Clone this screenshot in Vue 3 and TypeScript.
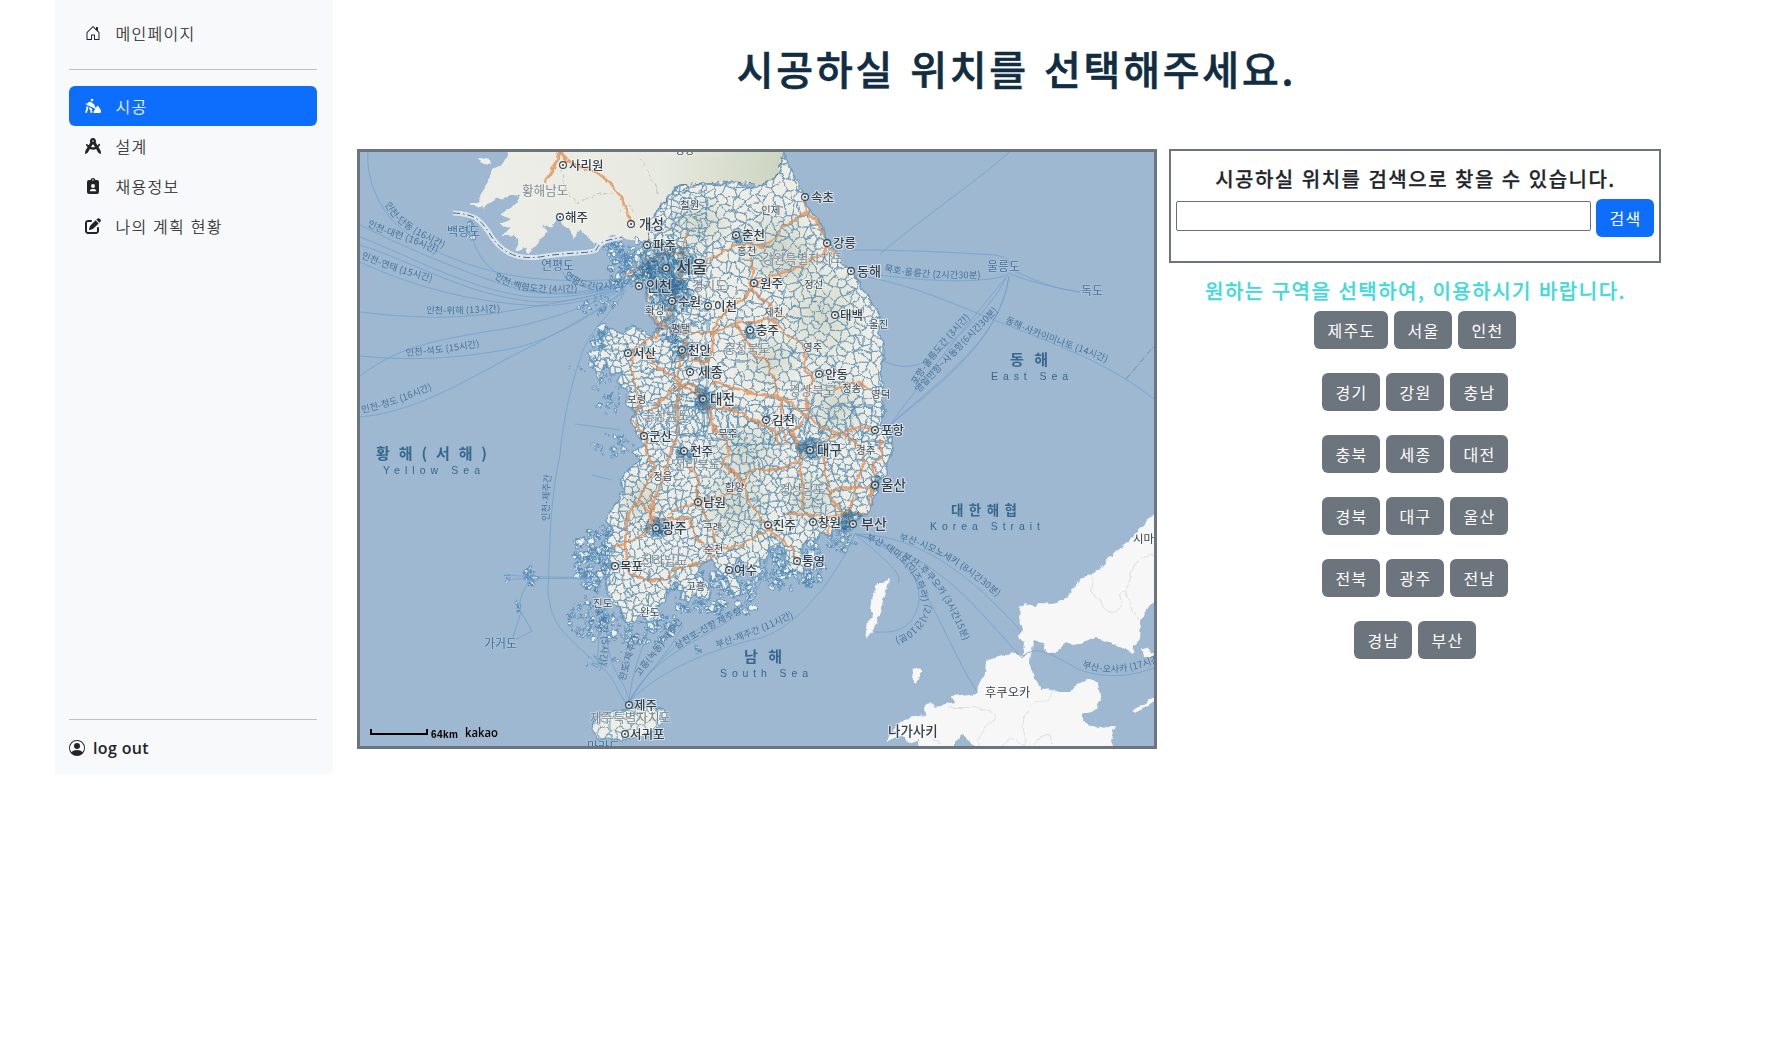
<script setup lang="ts">
type Pt = [number, number]

const menu = [
  { icon: 'dig', label: '시공', active: true },
  { icon: 'compass', label: '설계', active: false },
  { icon: 'badge', label: '채용정보', active: false },
  { icon: 'pen', label: '나의 계획 현황', active: false },
]

const regionRows = [
  ['제주도', '서울', '인천'],
  ['경기', '강원', '충남'],
  ['충북', '세종', '대전'],
  ['경북', '대구', '울산'],
  ['전북', '광주', '전남'],
  ['경남', '부산'],
]

// Seeded generator keeps the district mesh stable between renders
let seed = 20231
function rnd(): number {
  seed = (seed * 1664525 + 1013904223) % 4294967296
  return seed / 4294967296
}

function clipHalf(poly: Pt[], a: Pt, b: Pt): Pt[] {
  const mx = (a[0] + b[0]) / 2, my = (a[1] + b[1]) / 2
  const nx = b[0] - a[0], ny = b[1] - a[1]
  const side = (p: Pt) => (p[0] - mx) * nx + (p[1] - my) * ny
  const out: Pt[] = []
  for (let i = 0; i < poly.length; i++) {
    const p = poly[i], q = poly[(i + 1) % poly.length]
    const sp = side(p), sq = side(q)
    if (sp <= 0) out.push(p)
    if ((sp < 0 && sq > 0) || (sp > 0 && sq < 0)) {
      const t = sp / (sp - sq)
      out.push([p[0] + (q[0] - p[0]) * t, p[1] + (q[1] - p[1]) * t])
    }
  }
  return out
}

function mesh(x0: number, y0: number, x1: number, y1: number, s: number): string {
  const cols = Math.ceil((x1 - x0) / s), rows = Math.ceil((y1 - y0) / s)
  const pts: Pt[][] = []
  for (let r = 0; r < rows; r++) {
    pts.push([])
    for (let c = 0; c < cols; c++)
      pts[r].push([x0 + (c + 0.5 + (rnd() - 0.5) * 1.1) * s, y0 + (r + 0.5 + (rnd() - 0.5) * 1.1) * s])
  }
  let d = ''
  for (let r = 0; r < rows; r++)
    for (let c = 0; c < cols; c++) {
      const p = pts[r][c]
      let poly: Pt[] = [[p[0] - 2 * s, p[1] - 2 * s], [p[0] + 2 * s, p[1] - 2 * s], [p[0] + 2 * s, p[1] + 2 * s], [p[0] - 2 * s, p[1] + 2 * s]]
      for (let i = -2; i <= 2; i++)
        for (let j = -2; j <= 2; j++) {
          const q = pts[r + i]?.[c + j]
          if (q && (i || j)) poly = clipHalf(poly, p, q)
        }
      d += 'M' + poly.map((v) => v[0].toFixed(1) + ' ' + v[1].toFixed(1)).join('L') + 'Z'
    }
  return d
}

function blobs(cx: number, cy: number, rx: number, ry: number, n: number, size: number): string {
  let d = ''
  for (let i = 0; i < n; i++) {
    const a = rnd() * 6.283, k = Math.sqrt(rnd())
    const x = cx + Math.cos(a) * rx * k, y = cy + Math.sin(a) * ry * k
    const r = size * (0.15 + rnd() * rnd() * 1.25)
    const v: string[] = []
    for (let j = 0; j < 7; j++) {
      const t = (j / 7) * 6.283, q = r * (0.5 + rnd() * 0.85)
      v.push((x + Math.cos(t) * q).toFixed(1) + ' ' + (y + Math.sin(t) * q).toFixed(1))
    }
    d += 'M' + v.join('L') + 'Z'
  }
  return d
}

const south =
  'M784 152L786 160L793 172L798 184L804 194L806 205L815 216L822 227L828 242L836 252L843 263L853 272L860 284L867 296L875 307L880 320L879 332L884 345L884 358L880 372L883 384L882 398L885 412L880 425L886 431L893 427L892 440L892 455L888 463L887 474L881 481L879 492L872 499L871 508L864 517L857 519L852 529L842 534L836 529L829 536L822 533L815 542L806 541L800 549L808 560L803 573L793 568L784 559L786 549L777 546L769 549L766 560L758 557L762 573L754 579L747 570L738 558L732 564L737 577L742 593L734 598L728 583L720 571L711 560L702 564L694 575L702 585L712 592L706 601L695 594L688 601L680 599L684 587L676 581L669 591L666 602L657 606L658 618L650 622L640 616L632 624L624 621L621 607L612 603L606 592L607 577L613 567L607 557L615 549L606 541L613 530L606 521L611 510L618 500L624 489L620 480L628 470L640 461L633 453L645 444L637 435L631 424L634 413L627 405L627 391L617 382L622 371L612 376L606 360L600 384L594 366L599 352L606 345L602 338L610 329L622 333L632 326L642 330L652 337L657 327L650 315L655 306L645 298L647 285L634 281L624 280L628 270L636 263L633 254L643 247L648 240L650 220L656 214L665 200L673 190L681 185L694 186L705 183L722 185L735 182L750 187L764 185L775 177L781 170L782 158Z'
const north =
  'M512 152L506 157L503 164L491 170L488 184L482 193L477 203L469 205L484 207L491 203L495 197L503 199L512 194L522 196L514 207L501 215L511 219L501 225L511 228L503 235L515 233L519 244L516 250L527 247L528 253L537 243L547 231L541 224L552 226L557 218L549 215L559 217L564 227L571 228L573 239L579 229L589 238L598 245L605 242L610 234L622 236L635 242L648 240L650 220L665 200L681 185L705 183L735 182L764 185L778 174L783 152Z'
const jeju = 'M592 729L593 722L601 716L612 712L626 709L640 708L652 707L662 708L666 714L663 722L656 728L648 733L636 737L622 740L608 738L598 740Z'
const islands =
  blobs(620, 268, 12, 20, 60, 4) + blobs(640, 262, 26, 24, 80, 3) + blobs(617, 250, 14, 8, 36, 4) +
  blobs(595, 306, 20, 10, 34, 2.6) + blobs(601, 348, 11, 22, 60, 5.5) + blobs(607, 390, 16, 26, 44, 2.4) +
  blobs(598, 558, 24, 34, 170, 4.4) + blobs(588, 617, 20, 22, 100, 2.7) + blobs(640, 626, 38, 20, 130, 3.6) +
  blobs(702, 592, 34, 22, 130, 3.8) + blobs(742, 590, 14, 28, 56, 3.6) + blobs(790, 564, 38, 26, 190, 3.8) +
  blobs(840, 543, 16, 10, 34, 3) + blobs(612, 445, 22, 12, 34, 2.2) + blobs(530, 576, 5, 9, 26, 2.6) +
  blobs(518, 607, 3, 6, 10, 1.8) + blobs(507, 577, 2, 4, 6, 2) + blobs(610, 660, 24, 12, 30, 1.6) +
  blobs(471, 227, 7, 12, 16, 2.6) + blobs(697, 649, 5, 4, 8, 2) + blobs(583, 368, 30, 4, 12, 1.6)

const coarse = mesh(690, 150, 900, 420, 9.2)
const west = mesh(588, 150, 690, 420, 6.6)
const lower = mesh(588, 420, 900, 650, 7.2)
const jejuMesh = mesh(590, 705, 670, 742, 8)

const dense = [
  [666, 268, 27, 26, 260], [652, 282, 24, 24, 130], [676, 298, 16, 16, 80], [703, 399, 12, 10, 60],
  [811, 450, 12, 10, 60], [852, 524, 13, 13, 80], [657, 527, 11, 10, 55], [877, 484, 8, 8, 30],
  [739, 235, 8, 7, 20], [682, 351, 10, 8, 24], [752, 331, 7, 7, 18], [685, 452, 9, 8, 26], [672, 330, 14, 14, 30],
]
const denseMesh = dense.map(([x, y, rx, ry, n]) => blobs(x, y, rx, ry, n, 4.2)).join('')

const tints = [
  [775, 245, 44, 42], [822, 315, 46, 56], [790, 262, 36, 30], [735, 505, 42, 46], [745, 452, 40, 36],
  [835, 405, 34, 44], [770, 360, 34, 30], [700, 222, 38, 30], [640, 500, 26, 28], [812, 500, 34, 28],
]

const roads = [
  'M561 152L555 165L545 182', 'M561 152L566 160L580 167L598 173L611 184L622 198L628 215L633 224',
  'M784 152L785 155', 'M688 231L684 244L681 262L681 277L676 290L672 302L668 318L659 326',
  'M804 193L806 212L817 222L826 239L824 253L808 262L793 270L775 275L768 278L750 288L743 300L731 306L722 316L713 330',
  'M806 212L793 221L782 228L775 239L762 247L747 244L736 245L722 253L705 261',
  'M826 247L843 257L851 270L862 285', 'M750 254L753 270L750 286L760 298L772 308L784 318',
  'M626 276L640 267L652 258L668 254L682 252', 'M646 288L649 310L659 326L657 335L640 346L634 352L631 366L635 385L640 405L632 417L639 430L647 436L646 451L655 470',
  'M659 326L672 329L691 333L713 334L735 323L755 322L772 318L787 335L803 344L806 358L804 370L813 377L806 394L808 412L801 425L791 431L798 443',
  'M686 338L682 355L678 372L679 390L676 408L679 420L676 440L670 455L662 480L655 500L651 516L661 520L688 518L693 526L697 540L705 545',
  'M713 330L713 345L707 362L692 360L685 352', 'M735 323L745 338L755 355L767 360L773 377L779 397L781 410L782 430L788 445',
  'M645 352L658 367L672 375L681 387L695 392L703 403L711 415L714 430L727 440L729 455L722 463L737 477L745 485L748 500L760 518L770 530L782 540L793 550L796 560',
  'M711 382L728 386L745 391L762 395L779 397L790 402L805 415L823 428L840 434L858 427L875 430',
  'M705 395L690 383L678 386L664 398L651 411', 'M704 408L722 408L736 410L745 416L762 424L775 430L778 445',
  'M834 389L847 385L858 382L870 390', 'M798 443L811 449L824 442L840 433L852 440L862 447',
  'M822 450L826 470L828 490L835 505L846 515L851 524', 'M828 491L840 489L853 487L871 488L871 512L858 514L844 514L826 518L805 514L786 514',
  'M862 452L864 465L857 480L854 495L849 512L845 518', 'M880 440L882 457L873 462L875 480L870 496',
  'M690 468L697 475L698 485L698 502L705 516L712 530L716 543', 'M722 463L739 475L742 485L730 493L715 497L698 503L683 506L668 514',
  'M655 470L650 477L643 492L638 502L629 514L626 527L625 545L626 560L630 573L640 578L655 581L668 578L676 568L690 566L704 563L716 555',
  'M638 502L650 512L653 520L644 533L625 544L613 547', 'M703 551L730 548L744 544L757 537L768 530L774 525',
  'M651 492L652 515', 'M793 434L800 452L800 470L803 485L803 510', 'M742 483L750 472L756 469L775 470L789 466L798 460L804 458',
  'M826 517L828 535',
]

const ferries = [
  'M368 152C366 178 378 207 397 225C430 254 480 272 530 278C570 282 600 281 626 278',
  'M360 225C410 250 470 275 520 290C560 298 600 292 622 285', 'M360 237C410 256 470 290 530 297C570 299 600 292 622 286',
  'M360 245C410 260 470 298 540 302C575 303 600 293 625 286', 'M360 262C420 290 480 303 540 306C575 305 605 296 625 287',
  'M360 312C410 318 450 319 490 314C540 306 590 297 622 289', 'M360 376C400 345 440 340 490 331C540 325 590 305 624 289',
  'M360 356C420 362 470 357 520 347C560 335 595 315 624 290', 'M360 417C410 412 450 390 510 357C555 335 595 312 624 292',
  'M473 240C478 255 485 265 500 275C540 305 590 290 622 284', 'M563 272C566 285 590 290 620 285',
  'M626 290C610 315 588 330 579 362C568 395 562 430 560 455C550 500 550 540 548 592C552 625 560 630 598 665C615 675 615 690 628 706',
  'M880 254C930 212 985 175 1009 152', 'M852 250C900 250 950 252 995 255C1006 257 1010 260 1010 266',
  'M855 272C900 278 950 284 990 279C1005 277 1008 274 1010 272', 'M1015 271C1030 278 1050 288 1080 292M1010 274C1035 283 1055 288 1080 292',
  'M855 275C920 285 965 310 1010 326C1070 350 1110 365 1154 399', 'M890 425C930 370 975 315 1008 275',
  'M890 425C945 375 1000 340 1009 276', 'M890 425C925 395 1000 345 1009 276', 'M882 360C900 370 920 368 935 355C960 335 990 310 1006 278',
  'M855 534C920 535 970 575 1021 631', 'M855 534C940 560 960 590 1022 658C1035 640 1060 660 1080 670C1110 680 1135 675 1154 668',
  'M855 534C925 555 932 620 977 692', 'M855 534C910 545 925 590 917 609C910 630 895 633 875 632', 'M855 534C880 555 905 575 898 583',
  'M855 534C830 590 790 630 760 638C710 650 660 670 629 702', 'M770 545C765 590 745 610 725 623C690 645 650 660 629 702',
  'M755 570C760 600 740 610 710 622C670 645 645 675 629 702', 'M683 625C672 650 645 675 629 702', 'M650 625C642 650 632 670 629 702',
  'M610 595C605 620 605 650 615 670C620 680 628 690 629 702', 'M590 610C605 625 596 650 598 665',
  'M507 575C530 577 580 578 607 577M507 580C530 577 550 580 607 577M530 580C520 595 518 605 521 612L513 637M521 612L532 631L515 640',
  'M575 424L620 430', 'M592 475L612 480',
]

const lane = [
  ['인천-단동 (16시간)', 'M385 204C395 227 420 236 446 250'], ['인천-대련 (16시간)', 'M367 226C390 238 415 240 446 260'],
  ['인천-연태 (15시간)', 'M361 258C385 268 405 275 436 283'], ['인천-백령도간 (4시간)', 'M494 278C515 293 545 294 582 291'],
  ['연평도간(2시간)', 'M564 276C580 290 598 294 632 284'], ['인천-위해 (13시간)', 'M426 313C450 315 475 313 508 311'],
  ['인천-석도 (15시간)', 'M406 356C430 354 455 352 486 345'], ['인천-청도 (16시간)', 'M362 413C390 407 410 399 438 387'],
  ['인천-제주간', 'M549 521C549 505 549 490 552 470'], ['묵호-울릉간 (2시간30분)', 'M884 271C910 277 945 279 988 278'],
  ['포항-울릉도간 (3시간)', 'M916 385C930 363 948 340 976 312'], ['영일만항~사동항(6시간30분)', 'M919 393C940 370 965 345 1003 306'],
  ['동해-사카이미나토 (14시간)', 'M1005 322C1040 340 1075 348 1114 366'], ['부산-시모노세키 (8시간30분)', 'M899 540C935 548 970 572 1004 603'],
  ['부산-후쿠오카 (3시간15분)', 'M902 558C930 572 948 600 968 652'], ['부산-대마도(이즈하라)', 'M866 540C895 550 930 580 920 618'],
  ['(2시간10분)', 'M926 604C918 630 900 640 878 642'],
  ['부산-제주간 (11시간)', 'M717 648C745 638 770 630 799 614'], ['부산-오사카 (17시간', 'M1082 667C1110 676 1130 673 1160 661'],
  ['삼천포-신항 제주항', 'M677 649C700 635 725 620 750 610'], ['고흥(녹동)-제주간', 'M640 677C652 658 670 640 684 619'],
  ['완도-제주간', 'M625 681C630 665 632 650 642 631'], ['목포간 (5시간)', 'M593 610C605 625 602 640 599 672'],
]

// x, y, name, size, marker x
const cities: [number, number, string, number, number][] = [
  [569, 170, '사리원', 12.5, 563], [565, 222, '해주', 12.5, 560], [639, 229, '개성', 13.5, 631], [653, 250, '파주', 12.5, 647],
  [811, 202, '속초', 12.5, 805], [742, 240, '춘천', 12.5, 736], [833, 248, '강릉', 12.5, 827], [857, 276, '동해', 13, 851],
  [676, 273, '서울', 17, 666], [646, 291, '인천', 14, 639], [760, 288, '원주', 12.5, 754], [678, 306, '수원', 12.5, 672],
  [714, 311, '이천', 12.5, 708], [840, 320, '태백', 12.5, 835], [756, 335, '충주', 12.5, 750], [633, 358, '서산', 12.5, 628],
  [688, 355, '천안', 12.5, 682], [698, 377, '세종', 13.5, 690], [825, 379, '안동', 12.5, 819], [710, 404, '대전', 13.5, 703],
  [772, 425, '김천', 12.5, 766], [649, 441, '군산', 12.5, 644], [881, 435, '포항', 12.5, 875], [690, 456, '전주', 12.5, 684],
  [817, 455, '대구', 13.5, 810], [881, 490, '울산', 13.5, 875], [703, 507, '남원', 12.5, 698], [662, 533, '광주', 13.5, 656],
  [773, 530, '진주', 12.5, 768], [818, 527, '창원', 12.5, 813], [861, 529, '부산', 14, 853], [620, 571, '목포', 12.5, 615],
  [734, 575, '여수', 12.5, 729], [802, 566, '통영', 12.5, 797], [634, 710, '제주', 12.5, 629], [630, 739, '서귀포', 12.5, 625],
]
const towns: [number, number, string][] = [
  [680, 209, '철원'], [761, 214, '인제'], [737, 255, '홍천'], [804, 288, '정선'], [645, 314, '화성'], [764, 316, '제천'],
  [869, 328, '울진'], [671, 332, '평택'], [803, 351, '영주'], [627, 403, '보령'], [842, 392, '청송'], [871, 398, '영덕'],
  [718, 437, '무주'], [856, 454, '경주'], [653, 480, '정읍'], [725, 491, '함양'], [703, 531, '구례'], [704, 553, '순천'],
  [686, 590, '고흥'], [593, 607, '진도'], [640, 616, '완도'],
]
const provinces: [number, number, string][] = [
  [522, 195, '황해남도'], [762, 263, '강원특별자치도'], [692, 290, '경기도'], [724, 353, '충청북도'], [643, 420, '충청남도'],
  [789, 395, '경상북도'], [674, 469, '전라북도'], [779, 494, '경상남도'], [641, 565, '전라남도'], [590, 722, '제주특별자치도'],
]
const isles: [number, number, string][] = [
  [447, 236, '백령도'], [541, 270, '연평도'], [987, 271, '울릉도'], [1081, 295, '독도'], [484, 648, '가거도'], [587, 751, '마라도'],
]
const seas: [number, number, string, number, number, string, number, number][] = [
  [376, 459, '황 해 ( 서 해 )', 15, 111, 'Yellow Sea', 383, 97], [1010, 365, '동 해', 15, 38, 'East Sea', 991, 77],
  [744, 662, '남 해', 15, 38, 'South Sea', 720, 88], [951, 515, '대 한 해 협', 13.5, 66, 'Korea Strait', 930, 110],
]
</script>

<template>
  <div class="page">
    <aside class="sidebar">
      <a class="item home">
        <svg class="ico" viewBox="0 0 16 16"><path d="M8.354 1.146a.5.5 0 0 0-.708 0l-6 6A.5.5 0 0 0 1.5 7.5v7a.5.5 0 0 0 .5.5h4.5a.5.5 0 0 0 .5-.5v-4h2v4a.5.5 0 0 0 .5.5H14a.5.5 0 0 0 .5-.5v-7a.5.5 0 0 0-.146-.354L13 5.793V2.5a.5.5 0 0 0-.5-.5h-1a.5.5 0 0 0-.5.5v1.293L8.354 1.146zM2.5 14V7.707l5.5-5.5 5.5 5.5V14H10v-4a.5.5 0 0 0-.5-.5h-3a.5.5 0 0 0-.5.5v4H2.5z" /></svg>
        <span>메인페이지</span>
      </a>
      <hr />
      <nav>
        <a v-for="m in menu" :key="m.label" class="item" :class="{ active: m.active }">
          <svg v-if="m.icon === 'dig'" class="ico" viewBox="0 0 16 16">
            <circle cx="7" cy="2.1" r="1.35" />
            <path d="M4.1 3.9Q5 3.6 5.9 4.1L8.7 6Q9.3 6.5 9.5 7.2L10.2 9.3L11 9.8L12.1 8Q12.6 7.4 13.2 8L16 12.6Q16.3 15 14.8 15H9Q8 14.8 8.4 13.9L10.3 10.8L.6 6.2L1 5.3L2.2 5.8Q2.8 4.2 4.1 3.9ZM1.7 8L3.4 8.8L3.1 10.8L1.9 14.4Q1.5 15.2.7 14.8Q0 14.5.3 13.7L1.2 11ZM4.3 9.2L6.4 10.2Q7.2 10.8 7.2 11.7V14.2Q7.1 15.1 6.3 15Q5.4 15 5.4 14.1V12L4 11Z" />
          </svg>
          <svg v-else-if="m.icon === 'compass'" class="ico" viewBox="0 0 16 16">
            <path fill-rule="evenodd" d="M8 0a3 3 0 0 1 2.7 4.2L12.5 7.4L13.8 6Q14.5 5.6 15 6.2Q15.4 6.8 14.8 7.5L13.5 9L15.7 13L16 15.6Q15.9 16.1 15.4 15.9L13.1 14.5L11.2 11.1Q8.3 12.3 4.8 11.1L2.9 14.5L.6 15.9Q.1 16.1 0 15.6L.3 13L2.6 9.1L1.2 7.5Q.6 6.8 1.1 6.2Q1.7 5.6 2.3 6.2L3.7 7.3L5.3 4.4A3 3 0 0 1 8 0ZM8 2.2a.8.8 0 1 0 0 1.6a.8.8 0 0 0 0-1.6ZM7.6 6.6L6 9Q8 9.6 10 9L8.4 6.6Z" />
          </svg>
          <svg v-else-if="m.icon === 'badge'" class="ico" viewBox="0 0 16 16">
            <path fill-rule="evenodd" d="M4 2H5.6Q5.9 0 8 0T10.4 2H12Q14 2 14 4V14Q14 16 12 16H4Q2 16 2 14V4Q2 2 4 2ZM8 1.2a.8.8 0 1 0 0 1.6a.8.8 0 0 0 0-1.6ZM8 6a2 2 0 1 0 0 4a2 2 0 0 0 0-4ZM6.5 11Q5 11.2 4.7 13.2H11.3Q11 11.2 9.5 11Z" />
          </svg>
          <svg v-else class="ico" viewBox="0 0 512 512">
            <path d="M471.6 21.7c-21.9-21.9-57.3-21.9-79.2 0L362.3 51.7l97.9 97.9 30.1-30.1c21.9-21.9 21.9-57.3 0-79.2L471.6 21.7zm-299.2 220c-6.1 6.1-10.8 13.6-13.5 21.9l-29.6 88.8c-2.9 8.6-.6 18.1 5.8 24.6s15.9 8.7 24.6 5.8l88.8-29.6c8.2-2.7 15.7-7.4 21.9-13.5L437.7 172.3 339.7 74.3 172.4 241.7zM96 64C43 64 0 107 0 160V416c0 53 43 96 96 96H352c53 0 96-43 96-96V320c0-17.7-14.3-32-32-32s-32 14.3-32 32v96c0 17.7-14.3 32-32 32H96c-17.7 0-32-14.3-32-32V160c0-17.7 14.3-32 32-32h96c17.7 0 32-14.3 32-32s-14.3-32-32-32H96z" />
          </svg>
          <span>{{ m.label }}</span>
        </a>
      </nav>
      <hr class="bottom" />
      <a class="logout">
        <svg class="ico" viewBox="0 0 16 16"><path d="M11 6a3 3 0 1 1-6 0 3 3 0 0 1 6 0z" /><path fill-rule="evenodd" d="M0 8a8 8 0 1 1 16 0A8 8 0 0 1 0 8zm8-7a7 7 0 0 0-5.468 11.37C3.242 11.226 4.805 10 8 10s4.757 1.225 5.468 2.37A7 7 0 0 0 8 1z" /></svg>
        <strong>log out</strong>
      </a>
    </aside>

    <main>
      <h1>시공하실 위치를 선택해주세요.</h1>
      <div class="content">
        <div class="map">
          <svg viewBox="360 152 794 594" width="794" height="594">
            <defs>
              <clipPath id="land"><path :d="south" /></clipPath>
              <clipPath id="jeju"><path :d="jeju" /></clipPath>
              <radialGradient id="tint"><stop offset="0" stop-color="#cdd3c2" stop-opacity=".8" /><stop offset="1" stop-color="#cdd3c2" stop-opacity="0" /></radialGradient>
              <linearGradient id="nk" x1="0" x2="1"><stop offset="0" stop-color="#eeeee8" /><stop offset=".6" stop-color="#e8eae1" /><stop offset="1" stop-color="#ccd5c0" /></linearGradient>
              <filter id="rough" filterUnits="userSpaceOnUse" x="350" y="142" width="814" height="614" color-interpolation-filters="sRGB">
                <feTurbulence type="fractalNoise" baseFrequency=".13" numOctaves="2" seed="4" />
                <feDisplacementMap in="SourceGraphic" scale="6" xChannelSelector="R" yChannelSelector="G" />
              </filter>
              <path v-for="(l, i) in lane" :id="'lane' + i" :key="i" :d="l[1]" />
            </defs>
            <rect x="360" y="152" width="794" height="594" fill="#9db8d0" />

            <g filter="url(#rough)">
              <path :d="north" fill="url(#nk)" stroke="#eeeee8" stroke-width="1" />
              <path d="M505 146H785V156H509Z" fill="url(#nk)" />
              <path d="M481 158L490 160L491 164L484 163L479 160Z" fill="#eeeee8" />
              <g fill="none" stroke="#b9bc9c" stroke-width="1" stroke-dasharray="4 2" opacity=".8">
                <path d="M557 152L562 170L566 190L576 202L590 198L600 193L615 195" /><path d="M641 158L648 172L655 184L659 194" /><path d="M618 212L630 205L634 213" />
              </g>
              <g class="isle"><path :d="islands" /></g>
              <path :d="south" fill="#ededE5" />
              <g clip-path="url(#land)">
                <ellipse v-for="(t, i) in tints" :key="i" :cx="t[0]" :cy="t[1]" :rx="t[2]" :ry="t[3]" fill="url(#tint)" />
                <g class="mesh"><path :d="coarse" /><path :d="west" /><path :d="lower" /></g>
                <g class="roads"><path v-for="(r, i) in roads" :key="i" :d="r" /></g>
                <g class="mesh thin"><path :d="coarse" /><path :d="west" /><path :d="lower" /></g>
                <path class="dense" :d="denseMesh" />
              </g>
              <path :d="south" fill="none" stroke="#6497bc" stroke-width="1.5" stroke-linejoin="round" opacity=".85" />
              <g class="roads"><path :d="roads[0]" /><path :d="roads[1]" /></g>
              <path :d="jeju" fill="#ededE5" stroke="#6497bc" />
              <g clip-path="url(#jeju)" class="mesh"><path :d="jejuMesh" /></g>

              <g fill="#f7f7f7">
                <path d="M1164 504L1128 541L1110 556L1099 570L1082 578L1071 590L1067 599L1052 604L1040 603L1034 606L1025 603L1020 608L1019 618L1023 630L1019 637L1024 641L1023 656L1032 650L1033 642L1043 644L1046 652L1056 653L1067 643L1079 645L1095 638L1110 642L1121 648L1133 654L1134 646L1140 639L1141 621L1148 607L1164 598Z" />
                <path d="M1024 658L1016 653L1002 656L986 661L985 674L979 686L978 693L952 696L954 703L935 707L930 702L924 709L926 715L914 717L903 719L888 736L886 742L900 736L911 744L919 740L920 752H950L962 734L979 752H1115L1110 740L1115 726L1105 729L1087 725L1080 714L1097 710L1101 700L1098 684L1087 679L1077 684L1071 692L1055 692L1053 689L1041 690L1036 679L1029 662L1031 650Z" />
                <path d="M889 579L887 590L882 600L880 613L876 625L865 639L867 621L873 618L871 608L875 593L877 583L882 583Z" />
                <path d="M914 668L921 671L921 677L915 683L911 676ZM1141 649L1150 650L1154 654V656L1143 656ZM1133 710L1160 694V697L1137 712Z" />
              </g>
              <g fill="none" stroke="#dcdcdc" stroke-width=".9">
                <path d="M1092 575Q1094 584 1091 593L1101 600Q1105 618 1120 608L1121 594Q1128 585 1132 571Q1138 554 1160 554M1124 590Q1130 600 1132 610L1140 620" />
                <path d="M948 708Q960 707 980 708Q1000 710 992 722Q975 734 980 746M1053 689Q1052 702 1040 702Q1028 703 1026 715Q1020 725 1026 740Q1022 750 1014 740Q1007 738 1002 746M1034 746Q1040 731 1050 737L1053 746M925 734L943 744" />
              </g>
            </g>

            <g class="ferries"><path v-for="(f, i) in ferries" :key="i" :d="f" /></g>
            <path d="M1126 379L1154 346" fill="none" stroke="#7288a3" stroke-width=".9" stroke-dasharray="6 2 1 2" />
            <path d="M453 213C475 214 480 220 488 231C500 252 515 260 540 257C565 252 590 254 596 250C602 238 610 241 622 237" fill="none" stroke="#e4edf5" stroke-width="5" opacity=".85" />
            <path d="M453 213C475 214 480 220 488 231C500 252 515 260 540 257C565 252 590 254 596 250C602 238 610 241 622 237" fill="none" stroke="#5b6067" stroke-dasharray="7 3 1.5 3" />
            <path d="M648 240L650 220L665 200L681 185L705 183L735 182L764 185L778 174L782 155" filter="url(#rough)" fill="none" stroke="#69737d" stroke-dasharray="6 3 1.5 3" />

            <g class="lane">
              <text v-for="(l, i) in lane" :key="i"><textPath :href="'#lane' + i">{{ l[0] }}</textPath></text>
            </g>
            <text v-for="p in provinces" :key="p[2]" class="province" :x="p[0]" :y="p[1]">{{ p[2] }}</text>
            <text v-for="t in towns" :key="t[2]" class="town" :x="t[0]" :y="t[1]">{{ t[2] }}</text>
            <text v-for="s in isles" :key="s[2]" class="island" :x="s[0]" :y="s[1]">{{ s[2] }}</text>
            <text class="town" x="675" y="154">평강</text>
            <g v-for="c in cities" :key="c[2]">
              <circle :cx="c[4]" :cy="c[1] - 5" r="3.4" fill="#fff" fill-opacity=".6" stroke="#34434f" stroke-width="1.1" />
              <circle :cx="c[4]" :cy="c[1] - 5" r="1.1" fill="#34434f" />
              <text class="city" :x="c[0]" :y="c[1]" :font-size="c[3]">{{ c[2] }}</text>
            </g>
            <text class="city" x="888" y="736" font-size="13.5">나가사키</text>
            <text class="city japan" x="985" y="697" font-size="12.3">후쿠오카</text>
            <text class="city japan" x="1133" y="543" font-size="11.5">시마</text>

            <g v-for="s in seas" :key="s[5]" class="sea">
              <text :x="s[0]" :y="s[1]" :font-size="s[3]" font-weight="700" :textLength="s[4]">{{ s[2] }}</text>
              <text class="en" :x="s[6]" :y="s[1] + 15" font-size="10.5" :textLength="s[7]">{{ s[5] }}</text>
            </g>

            <path d="M371 729V734H427V729" fill="none" stroke="#000" stroke-width="2" />
            <text class="scale" x="431" y="738" textLength="27">64km</text>
            <text class="kakao" x="465" y="737" textLength="33" lengthAdjust="spacingAndGlyphs">kakao</text>
          </svg>
        </div>

        <section class="panel">
          <div class="search">
            <h5>시공하실 위치를 검색으로 찾을 수 있습니다.</h5>
            <div class="row">
              <input type="text" />
              <button class="btn primary">검색</button>
            </div>
          </div>
          <h5 class="guide">원하는 구역을 선택하여, 이용하시기 바랍니다.</h5>
          <div v-for="(row, i) in regionRows" :key="i" class="regions">
            <button v-for="r in row" :key="r" class="btn">{{ r }}</button>
          </div>
        </section>
      </div>
    </main>
  </div>
</template>

<style>
body { margin: 0; background: #fff; }
</style>

<style scoped>
* { box-sizing: border-box; }
.page {
  display: flex;
  align-items: flex-start;
  padding-left: 55px;
  font-family: "Noto Sans CJK KR", "Noto Sans", sans-serif;
  font-size: 16px;
  line-height: 24px;
  letter-spacing: 1.28px;
  color: #212529;
}
.sidebar {
  display: flex;
  flex-direction: column;
  flex: none;
  width: 278px;
  height: 774px;
  padding: 13px 16px 14px 14px;
  background: #f8f9fa;
}
.item {
  display: flex;
  align-items: center;
  height: 40px;
  padding: 0 16px;
  border-radius: 6px;
  font-weight: 300;
  -webkit-text-stroke: 0.2px currentColor;
}
.item span { margin: 0 0 1px 14.5px; word-spacing: 0.05em; }
.item.active { background: #0d6efd; color: #fff; }
.ico { width: 16px; height: 16px; flex: none; fill: currentColor; }
hr { width: 100%; margin: 16px 0; border: 0; border-top: 1px solid #c0c1c3; flex: none; }
hr.bottom { margin-top: auto; margin-bottom: 16px; }
.logout { display: flex; align-items: center; height: 24px; }
.logout strong { margin-left: 8px; font-family: "Open Sans", sans-serif; font-weight: 600; letter-spacing: 0.35px; }
main { margin-left: 24px; width: 1317px; }
h1 {
  height: 149px;
  margin: 0;
  padding: 44px 0 0 2px;
  font-size: 40px;
  font-weight: 500;
  line-height: 48px;
  letter-spacing: 2.8px;
  word-spacing: 0.08em;
  text-align: center;
  color: #112d42;
  -webkit-text-stroke: 0.6px #112d42;
}
.content { display: flex; gap: 12px; }
.map { width: 800px; height: 600px; flex: none; border: 3px solid #6c757d; overflow: hidden; letter-spacing: 0; }
.map svg { display: block; }
.panel { width: 492px; }
h5 {
  margin: 0;
  padding-left: 1px;
  font-size: 20px;
  line-height: 24px;
  font-weight: 500;
  letter-spacing: 1.5px;
  word-spacing: 0.05em;
  text-align: center;
  -webkit-text-stroke: 0.25px currentColor;
}
.search { height: 114px; padding: 16px 5px 0; border: 2px solid #6c757d; }
.row { display: flex; gap: 5px; margin-top: 8px; }
input { width: 415px; height: 30px; margin: 2px 0 0; border: 1px solid #6f6f6f; border-radius: 2px; background: #fff; }
.btn {
  height: 38px;
  margin: 0;
  padding: 0 12.5px 1px 13.5px;
  border: 0;
  border-radius: 6px;
  background: #6c757d;
  color: #fff;
  font: inherit;
  letter-spacing: 1.28px;
}
.btn.primary { background: #0d6efd; }
.guide { margin: 16px 0 8px; color: #43d9d9; }
.regions { display: flex; justify-content: center; gap: 6px; margin-bottom: 24px; }
.roads path { fill: none; stroke: #e59a66; stroke-width: 2.5; stroke-linejoin: round; opacity: 0.9; }
.mesh path { fill: none; stroke: #5e91b5; stroke-width: 1.05; stroke-linejoin: round; opacity: 0.8; }
.mesh.thin path { stroke-width: 0.5; opacity: 0.5; }
.dense { fill: #447eab; fill-opacity: 0.25; stroke: #2e6c9d; stroke-width: 0.6; stroke-opacity: 0.7; }
.isle path { fill: #ecefed; stroke: #5088b5; stroke-width: 0.9; }
.ferries path { fill: none; stroke: #6f9fce; stroke-width: 0.9; opacity: 0.8; }
.lane text { font-size: 9.2px; letter-spacing: 0.2px; fill: #48729c; }
text { paint-order: stroke; stroke-linejoin: round; }
.city { font-weight: 500; fill: #36404a; stroke: #fff; stroke-opacity: 0.6; stroke-width: 2px; }
.city.japan { font-weight: 400; }
.town { font-size: 10.5px; fill: #3f4b56; stroke: #fff; stroke-opacity: 0.6; stroke-width: 1.8px; }
.province { font-size: 12.6px; fill: #7b858c; stroke: #fff; stroke-opacity: 0.4; stroke-width: 1.5px; }
.island { font-size: 12px; fill: #42709c; stroke: #b9cde0; stroke-opacity: 0.6; stroke-width: 1.5px; }
.sea { fill: #36688f; }
.en { font-family: "Liberation Sans", sans-serif; }
.scale { font: 700 10px "Liberation Sans", sans-serif; }
.kakao { font: 600 13px "Open Sans", sans-serif; }
</style>
